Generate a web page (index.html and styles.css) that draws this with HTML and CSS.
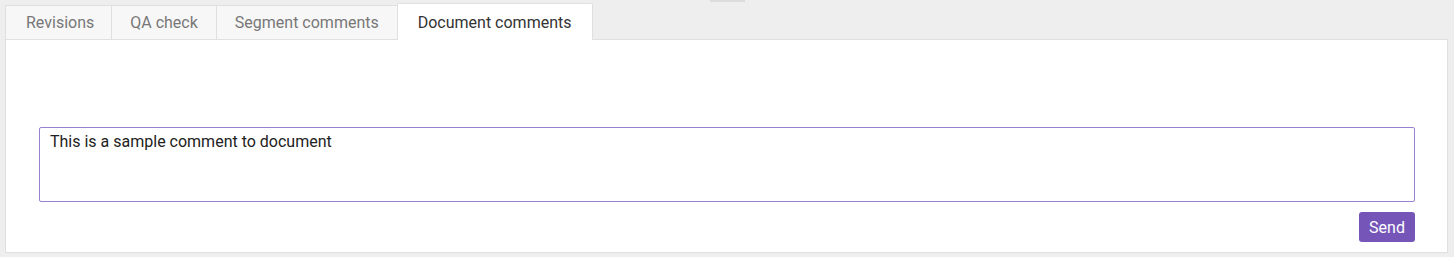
FILE: index.html
```html
<!DOCTYPE html>
<html lang="en">
<head>
<meta charset="UTF-8">
<meta name="viewport" content="width=device-width, initial-scale=1.0">
<title>Document comments</title>
<link rel="stylesheet" href="styles.css">
</head>
<body>
<div class="grip"></div>
<div id="comments-pane">
  <ul class="tabs">
    <li class="tab">Revisions</li>
    <li class="tab">QA check</li>
    <li class="tab">Segment comments</li>
    <li class="tab active">Document comments</li>
  </ul>

  <div class="panel">
    <textarea class="comment-box">This is a sample comment to document</textarea>
    <div class="actions">
      <button class="send-btn">Send</button>
    </div>
  </div>
</div>
</body>
</html>
```

FILE: styles.css
```css
body {
  font-family: Roboto, "Liberation Sans", sans-serif;
  background-color: #eeeeee;
  margin: 0;
  padding: 0;
  color: #333;
}

/* little drag handle above the pane */
.grip {
  position: absolute;
  left: 710px;
  top: 0;
  width: 35px;
  height: 2px;
  background-color: #dcdcdc;
}

#comments-pane {
  padding: 3px 6px 0 5px;
}

.tabs {
  list-style: none;
  margin: 0;
  padding: 0;
  display: flex;
  align-items: flex-end;
  height: 36px;
}

.tab {
  box-sizing: border-box;
  height: 34px;
  line-height: 33px;
  padding: 0 18px;
  font-size: 16px;
  color: #777;
  background-color: #f7f7f7;
  border: 1px solid #e0e0e0;
  border-bottom: none;
  margin-left: -1px;
  cursor: pointer;
}

.tab:first-child {
  margin-left: 0;
  padding: 0 17px 0 20px;
}

.tab.active {
  height: 37px;
  line-height: 38px;
  padding: 0 21px 0 20px;
  color: #333;
  background-color: #fff;
  margin-bottom: -1px;
  position: relative;
  border-radius: 2px 2px 0 0;
}

.panel {
  background-color: #fff;
  border: 1px solid #e0e0e0;
  padding: 87px 32px 10px 33px;
}

.comment-box {
  display: block;
  box-sizing: border-box;
  width: 100%;
  height: 75px;
  margin: 0;
  padding: 5px 10px;
  font-family: Roboto, "Liberation Sans", sans-serif;
  font-size: 16px;
  line-height: 18px;
  color: #222;
  border: 1px solid #9a80cf;
  border-radius: 2px;
  resize: none;
  outline: none;
}

.actions {
  display: flex;
  justify-content: flex-end;
  margin-top: 10px;
}

.send-btn {
  height: 30px;
  width: 56px;
  padding: 0;
  font-family: Roboto, "Liberation Sans", sans-serif;
  font-size: 16px;
  color: #fff;
  background-color: #7655b8;
  border: none;
  border-radius: 3px;
  cursor: pointer;
}

.send-btn:hover {
  opacity: 0.8;
}
```
